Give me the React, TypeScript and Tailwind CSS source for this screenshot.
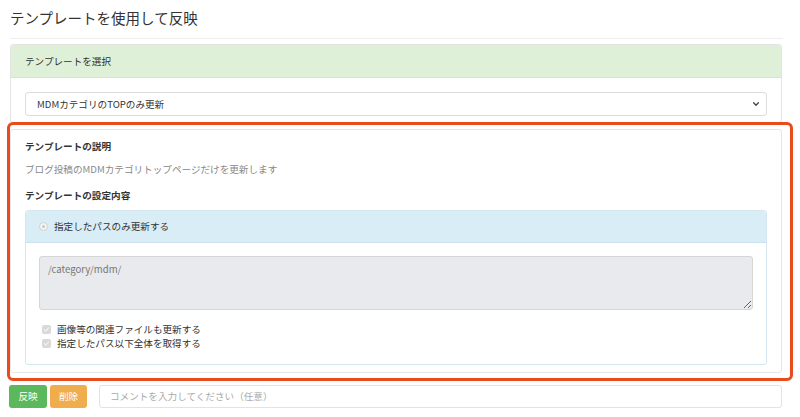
const font = { fontFamily: '"Noto Sans CJK JP", "Noto Sans", sans-serif' };

const App = () => {
  return (
    <div className="min-h-screen bg-white text-[#333] pl-[10px] pr-[17px]" style={font}>
      {/* Title */}
      <h1 className="pt-[8px] text-[14.5px] leading-[20px] font-normal text-[#333]">
        テンプレートを使用して反映
      </h1>
      <div className="mt-[10px] border-t border-[#eeeeee] w-[773px]" />

      {/* Template select panel */}
      <div className="mt-[5px] w-[772px] border border-[#e3e3e3] rounded-[3px]">
        <div className="h-[33px] flex items-center pl-[14px] bg-[#dff0d8] border-b border-[#d6e9c6] text-[9.6px] text-[#333] rounded-t-[3px]">
          テンプレートを選択
        </div>
        <div className="px-[14px] pt-[14px] pb-[6px]">
          <div className="h-[24px] flex items-center justify-between pl-[11px] pr-[6px] border border-[#dcdcdc] rounded-[3px] text-[9.6px] text-[#333] bg-white">
            <span>MDMカテゴリのTOPのみ更新</span>
            <svg width="8" height="8" viewBox="0 0 10 10" fill="none">
              <path d="M2 3.5l3 3 3-3" stroke="#444" strokeWidth="1.6" strokeLinecap="round" strokeLinejoin="round" />
            </svg>
          </div>
        </div>
      </div>

      {/* Template details panel (highlighted) */}
      <div className="relative mt-[6px] w-[772px]">
        <div className="border border-[#e6e6e6] rounded-[3px] px-[14px] pt-[9px] pb-[7px]">
          <div className="text-[9.6px] leading-[14px] font-bold text-[#333]">テンプレートの説明</div>
          <div className="mt-[9px] text-[9.6px] leading-[14px] text-[#888]">
            ブログ投稿のMDMカテゴリトップページだけを更新します
          </div>
          <div className="mt-[12px] text-[9.6px] leading-[14px] font-bold text-[#333]">テンプレートの設定内容</div>

          <div className="mt-[8px] border border-[#d4e6f0] rounded-[3px]">
            <div className="h-[32px] flex items-center pl-[13px] bg-[#d9edf7] border-b border-[#c9e2ee] text-[9.6px] text-[#333] rounded-t-[3px]">
              <span className="w-[9px] h-[9px] rounded-full border border-[#d0d0d0] bg-[#f4f4f4] flex items-center justify-center mr-[6px]">
                <span className="w-[3px] h-[3px] rounded-full bg-[#c8c8c8]" />
              </span>
              指定したパスのみ更新する
            </div>
            <div className="px-[13px] pt-[13px] pb-[14px]">
              <textarea
                readOnly
                value="/category/mdm/"
                className="block w-full h-[54px] bg-[#e9eaed] border border-[#d6d6d6] rounded-[3px] px-[8px] py-[5px] text-[9.6px] leading-[14px] text-[#777] outline-none"
                style={font}
              />
              <div className="mt-[12px] flex flex-col">
                {["画像等の関連ファイルも更新する", "指定したパス以下全体を取得する"].map((label) => (
                  <div key={label} className="flex items-center h-[14px] pl-[3px] text-[9.6px] text-[#333]">
                    <span className="w-[9px] h-[9px] rounded-[2px] bg-[#d9d9d9] flex items-center justify-center mr-[6px]">
                      <svg width="7" height="7" viewBox="0 0 10 10" fill="none">
                        <path d="M2 5.2l2 2 4-4.4" stroke="#f2f2f2" strokeWidth="1.6" strokeLinecap="round" strokeLinejoin="round" />
                      </svg>
                    </span>
                    {label}
                  </div>
                ))}
              </div>
            </div>
          </div>
        </div>
        {/* Highlight annotation */}
        <div className="pointer-events-none absolute -left-[3px] -top-[7px] -right-[11px] -bottom-[8px] border-[3px] border-[#e94b1d] rounded-[6px]" />
      </div>

      {/* Action row */}
      <div className="mt-[12px] flex items-center w-[772px]">
        <button className="w-[38px] h-[23px] rounded-[3px] bg-[#5cb85c] text-white text-[9.6px] -ml-[1px]">反映</button>
        <button className="ml-[3px] w-[37px] h-[23px] rounded-[3px] bg-[#f0ad4e] text-white text-[9.6px]">削除</button>
        <div className="ml-[12px] flex-1 h-[23px] flex items-center pl-[10px] border border-[#e3e3e3] rounded-[3px] text-[9.6px] text-[#aaa]">
          コメントを入力してください（任意）
        </div>
      </div>
    </div>
  );
};

export default App;
